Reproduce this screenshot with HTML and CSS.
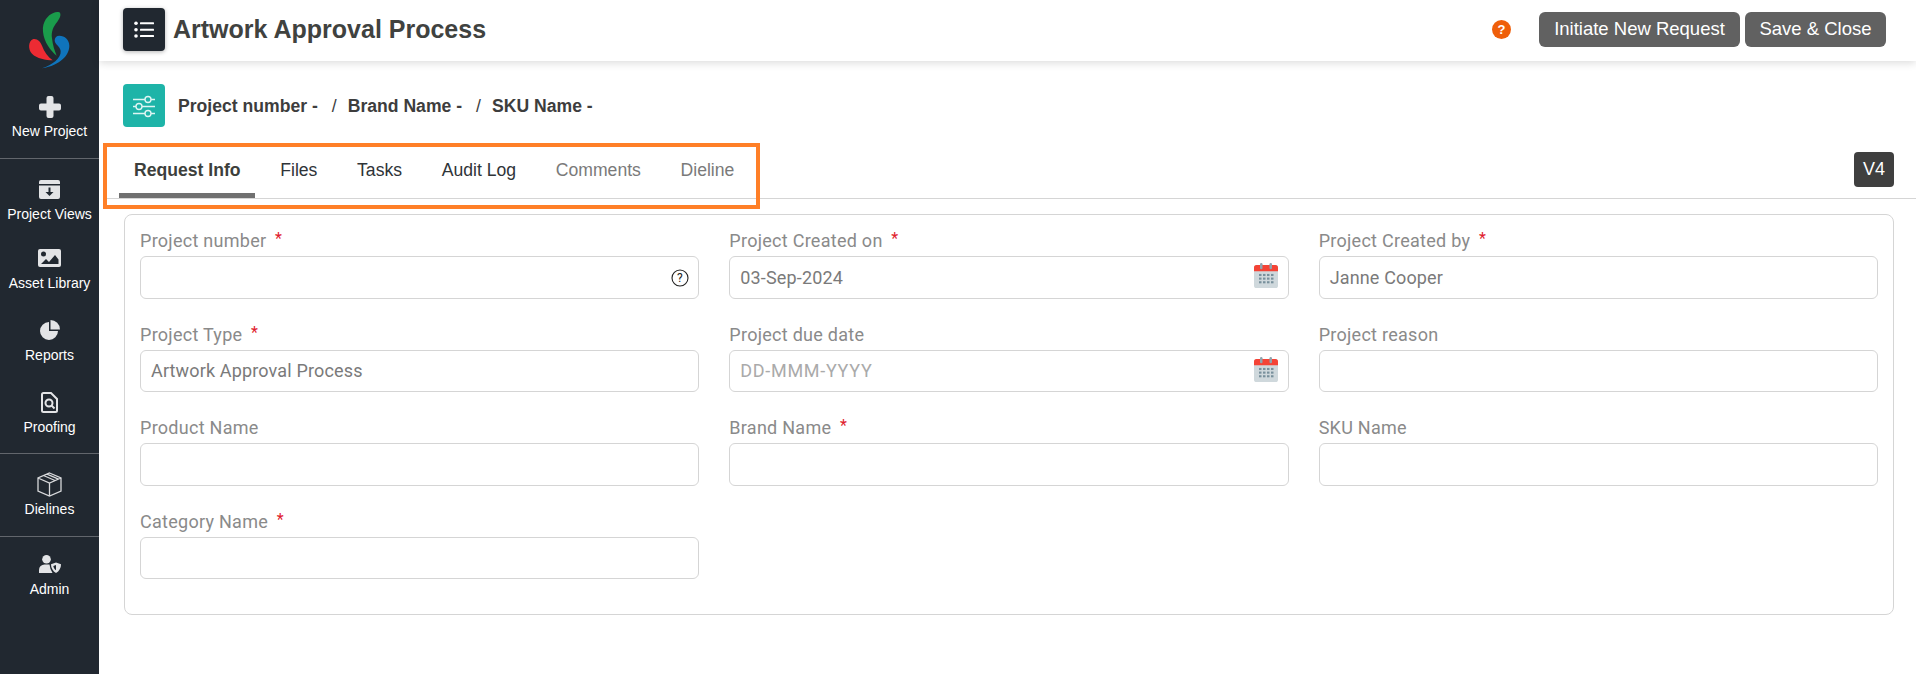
FILE: index.html
```html
<!DOCTYPE html>
<html lang="en">
<head>
<meta charset="utf-8">
<title>Artwork Approval Process</title>
<link rel="stylesheet" href="styles.css">
</head>
<body>
<div class="app">
  <aside class="sidebar">
    <div class="logo">
      <svg width="60" height="70" viewBox="0 0 180 210">
        <path fill="#1a9c4b" d="M118 22C124 26 122 38 112 50C100 64 93 80 96 100C98 120 104 138 110 152C92 136 72 112 69 80C66 50 84 30 100 24C106 21 113 20 118 22Z"/>
        <path fill="#ed2b33" d="M40 102C52 100 62 110 66 122C72 140 84 156 98 166C78 166 50 160 36 146C24 134 24 108 40 102Z"/>
        <path fill="#0f74bc" d="M118 92C134 92 148 104 148 122C148 150 122 180 66 190C96 180 124 160 122 138C120 124 104 118 104 106C104 98 110 92 118 92Z"/>
      </svg>
    </div>
    <a class="nav-item nav-first">
      <span class="glyph"><svg width="22" height="22" viewBox="0 0 22 22"><path fill="#e3e4e6" d="M7.500 2a2 2 0 0 1 2-2h3a2 2 0 0 1 2 2v5.500H20a2 2 0 0 1 2 2v3a2 2 0 0 1-2 2h-5.500V20a2 2 0 0 1-2 2h-3a2 2 0 0 1-2-2v-5.500H2a2 2 0 0 1-2-2v-3a2 2 0 0 1 2-2h5.500Z"/></svg></span>
      <span>New Project</span>
    </a>
    <div class="nav-group nav-group-main">
      <a class="nav-item">
        <span class="glyph"><svg width="21" height="19" viewBox="0 0 21 19"><path fill="#e3e4e6" d="M2 0h17a2 2 0 0 1 2 2v2H0V2a2 2 0 0 1 2-2ZM0 5.500h21V17a2 2 0 0 1-2 2H2a2 2 0 0 1-2-2Z"/><path fill="#212830" d="M9.500 7.500h2v4.500h3l-4 4-4-4h3Z"/></svg></span>
        <span>Project Views</span>
      </a>
      <a class="nav-item">
        <span class="glyph"><svg width="23" height="18" viewBox="0 0 23 18"><rect width="23" height="18" rx="2" fill="#e3e4e6"/><circle cx="5.500" cy="5" r="2.500" fill="#212830"/><path fill="#212830" d="M3 15l5-5 3 3 6-7 3.500 4.500V15Z"/></svg></span>
        <span>Asset Library</span>
      </a>
      <a class="nav-item nav-tall">
        <span class="glyph"><svg width="20" height="20" viewBox="0 0 20 20"><path fill="#e3e4e6" d="M9 2A9 9 0 1 0 18 11H9Z"/><path fill="#e3e4e6" d="M10.500 0A9.500 9.500 0 0 1 20 9.500H10.500Z"/></svg></span>
        <span>Reports</span>
      </a>
      <a class="nav-item nav-tall">
        <span class="glyph"><svg width="17" height="21" viewBox="0 0 17 21"><path fill="none" stroke="#e3e4e6" stroke-width="2" d="M2.500 1H10l6 6v11.500a1.500 1.500 0 0 1-1.500 1.500h-12A1.500 1.500 0 0 1 1 18.500v-16A1.500 1.500 0 0 1 2.500 1Z"/><circle cx="8" cy="11" r="3.500" fill="none" stroke="#e3e4e6" stroke-width="2"/><path stroke="#e3e4e6" stroke-width="2" d="M10.500 13.500l3 3"/></svg></span>
        <span>Proofing</span>
      </a>
    </div>
    <div class="nav-group">
      <a class="nav-item">
        <span class="glyph"><svg width="25" height="25" viewBox="0 0 25 25"><path fill="none" stroke="#d8d9db" stroke-width="1.300" d="M12.500 1 24 6v13l-11.500 5L1 19V6ZM1 6l11.500 5L24 6M12.500 11v13M6.500 3.500l11.500 5M10 2.200l11.500 5"/></svg></span>
        <span>Dielines</span>
      </a>
    </div>
    <div class="nav-group nav-last">
      <a class="nav-item nav-short">
        <span class="glyph"><svg width="22" height="18" viewBox="0 0 22 18"><circle cx="7.500" cy="4.300" r="4.300" fill="#e3e4e6"/><path fill="#e3e4e6" d="M0 18v-3a5.500 5.500 0 0 1 5.500-5.500h5l1 4.500 2 4Z"/><path fill="#e3e4e6" d="M17 7.500l5 1.800c0 3.700-1.800 7-5 8.700-3.200-1.700-5-5-5-8.700Z"/><path fill="#212830" d="M17 10v5.200c-1.400-1-2.400-2.600-2.700-4.300Z"/></svg></span>
        <span>Admin</span>
      </a>
    </div>
  </aside>
  <main class="main">
    <header class="topbar">
      <div class="menu-box">
        <svg width="20" height="18" viewBox="0 0 20 18"><g fill="#fff"><circle cx="2" cy="2.200" r="1.800"/><circle cx="2" cy="8.700" r="1.800"/><circle cx="2" cy="15" r="1.800"/><rect x="6" y="1.300" width="14" height="1.900" rx=".5"/><rect x="6" y="7.800" width="14" height="1.900" rx=".5"/><rect x="6" y="14.100" width="14" height="1.900" rx=".5"/></g></svg>
      </div>
      <h1 class="title">Artwork Approval Process</h1>
      <span class="help-dot">?</span>
      <button class="btn btn-wide">Initiate New Request</button>
      <button class="btn">Save &amp; Close</button>
    </header>
    <div class="crumbs">
      <div class="slider-box">
        <svg width="24" height="24" viewBox="0 0 24 24" fill="none" stroke="#dff5f3" stroke-width="1.400"><path d="M1 5.500h12M19 5.500h4M1 12.500h3M10 12.500h13M1 19.500h12M19 19.500h4"/><circle cx="16" cy="5.500" r="3"/><circle cx="7" cy="12.500" r="3"/><circle cx="16" cy="19.500" r="3"/></svg>
      </div>
      <span class="crumb">Project number -</span>
      <span class="crumb-sep">/</span>
      <span class="crumb">Brand Name -</span>
      <span class="crumb-sep">/</span>
      <span class="crumb">SKU Name -</span>
    </div>
    <div class="tabs-row">
      <nav class="tabs">
        <a class="tab tab-active">Request Info</a>
        <a class="tab">Files</a>
        <a class="tab">Tasks</a>
        <a class="tab">Audit Log</a>
        <a class="tab tab-muted">Comments</a>
        <a class="tab tab-muted">Dieline</a>
      </nav>
      <span class="version">V4</span>
    </div>
    <form class="card">
      <div class="field">
        <label class="label">Project number <i class="req">*</i></label>
        <div class="input">
          <svg class="input-end help-end" width="18" height="18" viewBox="0 0 18 18"><circle cx="9" cy="9" r="8" fill="none" stroke="#222" stroke-width="1.100"/><text x="9" y="13" text-anchor="middle" class="qmark">?</text></svg>
        </div>
      </div>
      <div class="field">
        <label class="label">Project Created on <i class="req">*</i></label>
        <div class="input">03-Sep-2024
          <svg class="input-end cal" width="24" height="25" viewBox="0 0 24 24" preserveAspectRatio="none"><use href="#cal"/></svg>
        </div>
      </div>
      <div class="field">
        <label class="label">Project Created by <i class="req">*</i></label>
        <div class="input">Janne Cooper</div>
      </div>
      <div class="field">
        <label class="label">Project Type <i class="req">*</i></label>
        <div class="input">Artwork Approval Process</div>
      </div>
      <div class="field">
        <label class="label">Project due date</label>
        <div class="input input-ph">DD-MMM-YYYY
          <svg class="input-end cal" width="24" height="25" viewBox="0 0 24 24" preserveAspectRatio="none"><use href="#cal"/></svg>
        </div>
      </div>
      <div class="field">
        <label class="label">Project reason</label>
        <div class="input"></div>
      </div>
      <div class="field">
        <label class="label">Product Name</label>
        <div class="input"></div>
      </div>
      <div class="field">
        <label class="label">Brand Name <i class="req">*</i></label>
        <div class="input"></div>
      </div>
      <div class="field">
        <label class="label">SKU Name</label>
        <div class="input"></div>
      </div>
      <div class="field">
        <label class="label">Category Name <i class="req">*</i></label>
        <div class="input"></div>
      </div>
    </form>
  </main>
</div>
<svg class="defs" width="0" height="0">
  <symbol id="cal" viewBox="0 0 24 24">
    <rect y="2" width="24" height="22" rx="2.500" fill="#cfd8dc"/>
    <path fill="#f44336" d="M2.500 2h19A2.500 2.500 0 0 1 24 4.500V8H0V4.500A2.500 2.500 0 0 1 2.500 2Z"/>
    <g fill="#90a4ae"><rect x="6" y="0" width="2.500" height="6" rx="1.200"/><rect x="15.500" y="0" width="2.500" height="6" rx="1.200"/></g>
    <g fill="#78909c">
      <rect x="5" y="10.500" width="2.500" height="2"/><rect x="9" y="10.500" width="2.500" height="2"/><rect x="13" y="10.500" width="2.500" height="2"/><rect x="17" y="10.500" width="2.500" height="2"/>
      <rect x="5" y="14" width="2.500" height="2"/><rect x="9" y="14" width="2.500" height="2"/><rect x="13" y="14" width="2.500" height="2"/><rect x="17" y="14" width="2.500" height="2"/>
      <rect x="5" y="17.500" width="2.500" height="2"/><rect x="9" y="17.500" width="2.500" height="2"/><rect x="13" y="17.500" width="2.500" height="2"/><rect x="17" y="17.500" width="2.500" height="2"/>
    </g>
  </symbol>
</svg>
</body>
</html>
```

FILE: styles.css
```css
*, *::before, *::after { box-sizing: border-box; }
html, body { margin: 0; height: 100%; overflow: hidden; background: #fff; }
body { font-family: "Liberation Sans", Arial, sans-serif; color: #3c3c3c; }
.defs { position: absolute; }
.app { display: flex; height: 674px; }

.sidebar { width: 99px; flex: none; background: #212830; color: #fff; display: flex; flex-direction: column; }
.logo { height: 75px; padding: 5px 0 0 20px; }
.nav-item { display: flex; flex-direction: column; align-items: center; justify-content: flex-end; font-size: 14px; line-height: 16px; height: 69px; padding-bottom: 6px; }
.nav-tall { height: 72px; }
.nav-short { height: 66px; }
.glyph { height: 24px; display: flex; align-items: center; justify-content: center; margin-bottom: 5px; flex: none; }
.nav-first { height: 84px; border-bottom: 1px solid #62666c; padding-bottom: 19px; }
.nav-first .glyph { margin-bottom: 4px; }
.nav-group { border-bottom: 1px solid #62666c; padding-bottom: 13px; }
.nav-group-main { padding-bottom: 12px; }
.nav-last { border-bottom: 0; }

.main { flex: 1; min-width: 0; display: flex; flex-direction: column; padding-right: 22px; }
.topbar { height: 61px; margin-right: -22px; padding: 0 30px 2px 24px; display: flex; align-items: center; box-shadow: 0 2px 8px rgba(0,0,0,.14); background: #fff; }
.menu-box { width: 42px; height: 43px; border-radius: 4px; background: #212830; display: flex; align-items: center; justify-content: center; box-shadow: 0 1px 4px rgba(0,0,0,.3); margin-right: 8px; }
.title { margin: 0; font-size: 25px; font-weight: 700; color: #40423f; flex: 1; }
.help-dot { width: 19px; height: 19px; border-radius: 50%; background: #ef5f0a; color: #fff; font-size: 13px; font-weight: 700; display: flex; align-items: center; justify-content: center; margin-right: 28px; }
.btn { height: 35px; width: 141px; border: 0; border-radius: 6px; background: #616161; color: #fff; font: 18.500px "Liberation Sans", Arial, sans-serif; padding: 0 0 2px; margin-left: 5px; }
.btn-wide { width: 201px; margin-left: 0; }

.crumbs { display: flex; align-items: center; height: 43px; margin: 23px 0 0 24px; font-size: 17.600px; font-weight: 700; color: #3d3d3d; }
.slider-box { width: 42px; height: 43px; border-radius: 4px; background: #1eb4a8; display: flex; align-items: center; justify-content: center; margin-right: 13px; }
.crumb, .crumb-sep { padding-top: 2px; }
.crumb-sep { font-weight: 400; margin: 0 11px 0 14px; }

.tabs-row { display: flex; justify-content: space-between; align-items: center; height: 72px; margin-left: 4px; margin-right: -22px; padding-right: 22px; border-bottom: 1px solid #d5d5d5; position: relative; }
.tabs { display: flex; align-self: stretch; margin: 0; padding: 0 0 0 16px; position: relative; }
.tabs::after { content: ""; position: absolute; left: 0; top: 16px; width: 657px; height: 66px; border: 4.500px solid #ff7f27; pointer-events: none; }
.tab { font-size: 17.600px; line-height: 22px; padding: 32px 14px 0 15px; margin-right: 10.700px; color: #2f3438; height: 71px; position: relative; }
.tab-active { font-weight: 700; color: #3d3f3c; border-bottom: 5px solid #707070; }
.tab-muted { color: #7a7a7a; }
.version { width: 40px; height: 35px; border-radius: 4px; background: #3f3f3f; color: #fff; font-size: 18px; display: flex; align-items: center; justify-content: center; margin-top: 13px; }

.card { margin: 15px 0 0 25px; height: 401px; border: 1px solid #d5d5d5; border-radius: 8px; padding: 11px 15px 0; display: grid; grid-template-columns: repeat(3, 1fr); column-gap: 30px; align-content: start; row-gap: 21px; }
.field { display: flex; flex-direction: column; }
.label { font: 18px/30px Roboto, sans-serif; letter-spacing: .27px; color: #8a8a8a; height: 30px; display: block; }
.req { color: #e0202c; font-style: normal; margin-left: 4px; font-size: 16px; position: relative; top: -3px; }
.input { height: 42.500px; border: 1px solid #d5d5d5; border-radius: 6px; font: 18px/41px Roboto, sans-serif; letter-spacing: .15px; color: #7a7a7a; padding: 0 11px 0 10px; display: flex; justify-content: space-between; align-items: center; background: #fff; }
.input-ph { color: #aaa; letter-spacing: .7px; }
.input-end { margin-left: auto; margin-right: -1px; }
.help-end { margin-right: -2px; margin-top: 2px; }
.cal { margin-top: -3px; }
.qmark { font: 400 12px Roboto, sans-serif; fill: #222; }
```
